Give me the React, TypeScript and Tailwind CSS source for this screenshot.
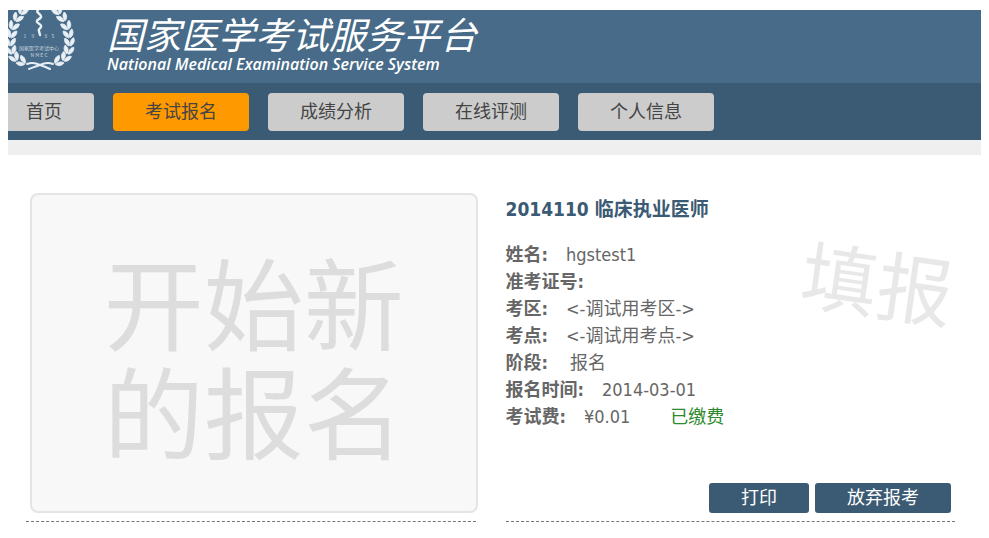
import React from 'react';

const navItems = ['首页', '考试报名', '成绩分析', '在线评测', '个人信息'];

// Leaves of the right half of the wreath: x, y, angle
const leaves = [
    [49, 1, 28], [54, 8, 30], [58, 16, 24], [60, 24, 14],
    [61, 32, 4], [60, 40, -14], [57, 47, -34], [50, 51, -58],
];

const WreathHalf: React.FC = () => (
    <g stroke="#e8eff5" strokeWidth="0.8" strokeLinejoin="round">
        {leaves.map(([x, y, angle]) => (
            <g key={y} transform={`translate(${x} ${y}) rotate(${-angle})`}>
                <path d="M0 4C-4 2-5-1-4-4C-1-3 1-1 0 4Z" />
                <path d="M1 4C1 0 2-3 5-4C6-1 5 3 1 4Z" />
            </g>
        ))}
    </g>
);

const Logo: React.FC = () => (
    <svg width="68" height="64" viewBox="0 0 68 64" fill="#e8eff5" className="shrink-0" aria-hidden="true">
        <WreathHalf />
        <g transform="translate(64 0) scale(-1 1)">
            <WreathHalf />
        </g>
        <g fill="none" stroke="#e8eff5" strokeLinecap="round">
            <path d="M19 54C24 52 28 53 32 55C38 57 40 58 42 59" strokeWidth="2" />
            <path d="M45 54C40 52 36 53 32 55C26 57 24 58 21 59" strokeWidth="2" />
            <path d="M30 0C27 3 34 4 33 7C32 10 28 9 29 12C30 14 34 14 33 17C32 19 30 19 31 21L32 25" strokeWidth="2.4" />
        </g>
        <g fontFamily="'Noto Sans CJK SC', sans-serif" textAnchor="middle" opacity="0.75">
            <text x="17" y="28" fontSize="5">1</text>
            <text x="25" y="28" fontSize="5">9</text>
            <text x="38" y="28" fontSize="5">8</text>
            <text x="45" y="28" fontSize="5">5</text>
            <text x="31" y="40" fontSize="5">国家医学考试中心</text>
            <text x="31" y="47" fontSize="5">N M E C</text>
        </g>
    </svg>
);

const Header: React.FC = () => (
    <header className="overflow-hidden">
        <div className="flex h-[73px] gap-[31px] bg-[#476b88] text-white">
            <Logo />
            <div className="pt-[9px] italic">
                <h1 className="text-[37px] leading-9 whitespace-nowrap">国家医学考试服务平台</h1>
                <p className="font-['Open_Sans'] text-base leading-[18px] font-semibold whitespace-nowrap">
                    National Medical Examination Service System
                </p>
            </div>
        </div>
        <nav className="bg-[#3b5a73] pt-[10px] pb-[9px]">
            <ul className="-ml-[14px] flex gap-[19px]">
                {navItems.map((item) => (
                    <li key={item}>
                        <a
                            href="#"
                            className={`block rounded px-8 text-lg leading-[38px] whitespace-nowrap text-[#444] ${item === '考试报名' ? 'bg-[#ff9900]' : 'bg-[#cccccc]'}`}
                        >
                            {item}
                        </a>
                    </li>
                ))}
            </ul>
        </nav>
        <div className="h-[15px] bg-[#efefef]" />
    </header>
);

const ExamInfo: React.FC = () => (
    <section className="relative flex flex-col border-b border-dashed border-[#777] pt-0.5 pb-2">
        <h2 className="text-[19px] leading-7 font-bold text-[#3b5a73]">2014110 临床执业医师</h2>
        <dl className="mt-[18px] text-lg leading-[27px] text-[#666] [&_dt]:font-bold [&>div]:flex [&>div]:gap-[18px]">
            <div><dt>姓名:</dt><dd>hgstest1</dd></div>
            <div><dt>准考证号:</dt><dd /></div>
            <div><dt>考区:</dt><dd>&lt;-调试用考区-&gt;</dd></div>
            <div><dt>考点:</dt><dd>&lt;-调试用考点-&gt;</dd></div>
            <div><dt>阶段:</dt><dd className="pl-1">报名</dd></div>
            <div><dt>报名时间:</dt><dd>2014-03-01</dd></div>
            <div>
                <dt>考试费:</dt>
                <dd>¥0.01<span className="ml-10 text-[#2b8a2b]">已缴费</span></dd>
            </div>
        </dl>
        <div className="mt-auto mr-1 flex justify-end gap-1.5 text-lg leading-[30px] text-white">
            <button className="rounded-[3px] bg-[#3b5a73] px-8">打印</button>
            <button className="rounded-[3px] bg-[#3b5a73] px-8">放弃报考</button>
        </div>
        {/* Status stamp */}
        <span className="absolute top-11 right-0.5 rotate-8 text-[76px] leading-[100px] text-[#e8e8e8]">填报</span>
    </section>
);

const App: React.FC = () => (
    <div className="min-h-screen bg-white px-2 pt-2.5 font-['DejaVu_Sans_Condensed','Noto_Sans_CJK_SC',sans-serif]">
        <Header />
        <main className="grid grid-cols-2 gap-[30px] pt-[38px] pr-[26px] pl-[18px]">
            <section className="border-b border-dashed border-[#777] pb-2">
                <button className="-mr-1 ml-1 flex h-[320px] w-[calc(100%-2px)] items-center justify-center rounded-lg border-2 border-[#e4e4e4] bg-[#f8f8f8] pt-5 text-[100px] leading-[109px] text-[#dddddd]">
                    <span>开始新<br />的报名</span>
                </button>
            </section>
            <ExamInfo />
        </main>
    </div>
);

export default App;
